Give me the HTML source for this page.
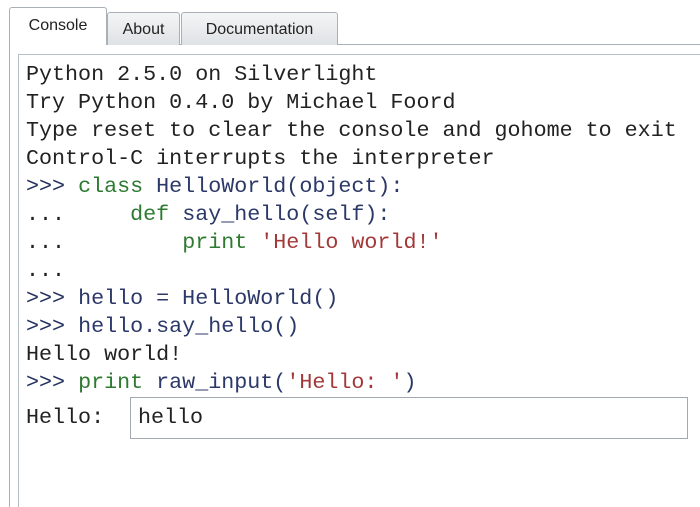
<!DOCTYPE html>
<html><head><meta charset="utf-8"><style>
html,body{margin:0;padding:0;width:700px;height:507px;overflow:hidden;background:#fff;position:relative;font-family:"Liberation Sans",sans-serif}
.tab{position:absolute;border:1px solid #a9b0b8;border-bottom:none;border-radius:3px 3px 0 0;font-size:16px;color:#222;box-sizing:border-box;text-align:center}
.t2{background:linear-gradient(#f4f5f6,#dfe2e5);}
#panel{position:absolute;left:9px;top:44px;width:691px;height:463px;border-left:1px solid #a9b0b8;border-top:1px solid #a9b0b8;box-sizing:border-box;background:#fff}
#box{position:absolute;left:18px;top:54px;width:682px;height:453px;border-left:1px solid #b8bec5;border-top:1px solid #b8bec5;box-sizing:border-box;background:#fff}
.l{position:absolute;left:26px;font-family:"Liberation Mono",monospace;font-size:21.7px;line-height:28px;white-space:pre;color:#222}
.p{color:#22305c}.k{color:#2d7a30}.s{color:#a33838}.n{color:#2b3868}
#inp{position:absolute;left:130px;top:397px;width:558px;height:42px;border:1px solid #a3a9b0;box-sizing:border-box;background:#fff}
</style></head><body>
<div id="panel"></div>
<div class="tab t2" style="left:107px;top:12px;width:73px;height:33px;line-height:33px">About</div>
<div class="tab t2" style="left:181px;top:12px;width:157px;height:33px;line-height:33px">Documentation</div>
<div class="tab" style="left:9px;top:7px;width:98px;height:38px;line-height:36px;background:#fff;border-color:#a9b0b8">Console</div>
<div id="box"></div>
<div class="l" style="top:61px">Python 2.5.0 on Silverlight</div>
<div class="l" style="top:89px">Try Python 0.4.0 by Michael Foord</div>
<div class="l" style="top:117px">Type reset to clear the console and gohome to exit</div>
<div class="l" style="top:145px">Control-C interrupts the interpreter</div>
<div class="l" style="top:173px"><span class="p">&gt;&gt;&gt;</span> <span class="k">class</span> <span class="n">HelloWorld(object):</span></div>
<div class="l" style="top:201px">...     <span class="k">def</span> <span class="n">say_hello(self):</span></div>
<div class="l" style="top:229px">...         <span class="k">print</span> <span class="s">'Hello world!'</span></div>
<div class="l" style="top:257px">...</div>
<div class="l" style="top:285px"><span class="p">&gt;&gt;&gt;</span> <span class="n">hello = HelloWorld()</span></div>
<div class="l" style="top:313px"><span class="p">&gt;&gt;&gt;</span> <span class="n">hello.say_hello()</span></div>
<div class="l" style="top:341px">Hello world!</div>
<div class="l" style="top:369px"><span class="p">&gt;&gt;&gt;</span> <span class="k">print</span> <span class="n">raw_input(</span><span class="s">'Hello: '</span><span class="n">)</span></div>
<div class="l" style="top:404px">Hello:</div>
<div id="inp"></div>
<div class="l" style="left:138px;top:404px">hello</div>
</body></html>
